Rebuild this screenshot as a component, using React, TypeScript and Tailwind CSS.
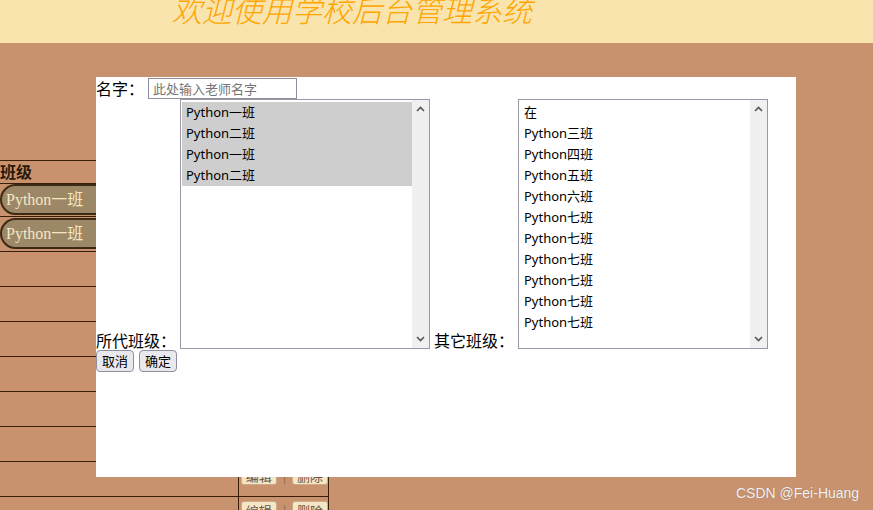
import React from 'react';

const cjk = '"Noto Sans CJK SC", sans-serif';
const uiFont = '"Noto Sans", "Noto Sans CJK SC", sans-serif';
const serif = '"Liberation Serif", "Noto Sans CJK SC", serif';

const chosen = ['Python一班', 'Python二班', 'Python一班', 'Python二班'];
const others = [
  '在',
  'Python三班',
  'Python四班',
  'Python五班',
  'Python六班',
  'Python七班',
  'Python七班',
  'Python七班',
  'Python七班',
  'Python七班',
  'Python七班',
];

function ListBox({ items, selected }: { items: string[]; selected: number }) {
  return (
    <div className="flex w-[250px] h-[250px] border border-[#9a98a6] bg-white">
      <div className="flex-1 pt-[2px] pl-[1px]" style={{ fontFamily: uiFont }}>
        {items.map((t, i) => (
          <div
            key={i}
            className={
              i < selected
                ? 'h-[21px] leading-[21px] pl-[4px] text-[13px] text-black bg-[#cecece]'
                : 'h-[21px] leading-[21px] pl-[4px] text-[13px] text-black'
            }
          >
            {t}
          </div>
        ))}
      </div>
      <div className="w-[17px] bg-[#f0f0f0] flex flex-col justify-between items-center pt-[6px] pb-[6px]">
        <svg width="9" height="6" viewBox="0 0 9 6">
          <path d="M1 5 L4.5 1.5 L8 5" fill="none" stroke="#555" strokeWidth="1.6" />
        </svg>
        <svg width="9" height="6" viewBox="0 0 9 6">
          <path d="M1 1 L4.5 4.5 L8 1" fill="none" stroke="#555" strokeWidth="1.6" />
        </svg>
      </div>
    </div>
  );
}

function ActionCell() {
  return (
    <div className="flex items-start pt-[4px] pl-[2px] gap-[6px] text-[13px]" style={{ fontFamily: cjk }}>
      <span className="h-[19px] w-[36px] leading-[17px] text-center bg-[#f5e6c8] border border-[#c9ab85] rounded-[3px] text-[#6b5440]">编辑</span>
      <span className="text-[#8a6a50] leading-[19px]">|</span>
      <span className="h-[19px] w-[36px] leading-[17px] text-center bg-[#f5e6c8] border border-[#c9ab85] rounded-[3px] text-[#6b5440]">删除</span>
    </div>
  );
}

function Pill() {
  return (
    <div
      className="w-[200px] h-[31px] bg-[#9c8866] border-2 border-[#3b2a14] rounded-l-[16px] pl-[4px] text-[16px] leading-[27px] text-[#f5e6c4]"
      style={{ fontFamily: serif }}
    >
      Python一班
    </div>
  );
}

export default function App() {
  return (
    <div className="relative w-[873px] h-[510px] overflow-hidden bg-[#c8926f]">
      <div className="h-[43px] bg-[#f8e4ac] overflow-hidden">
        <h1
          className="ml-[172px] mt-[-6px] text-[30px] leading-[30px] italic font-light text-[#ffa500]"
          style={{ fontFamily: cjk }}
        >
          欢迎使用学校后台管理系统
        </h1>
      </div>

      {/* class table behind the dialog */}
      <div className="mt-[117px] w-[329px]">
        <div className="h-[24px] border-t border-b border-[#3a1e08] text-[16px] leading-[20px] font-semibold text-[#2a1808]" style={{ fontFamily: cjk }}>
          班级
        </div>
        <div className="h-[33px] border-b border-[#3a1e08]">
          <Pill />
        </div>
        <div className="h-[35px] border-b border-[#3a1e08] pt-[1px]">
          <Pill />
        </div>
        {[0, 1, 2, 3, 4, 5, 6, 7].map((i) => (
          <div key={i} className="h-[35px] border-b border-[#3a1e08] flex">
            <div className="w-[238px]" />
            <div className="w-[91px] border-l border-r border-[#3a1e08]">
              <ActionCell />
            </div>
          </div>
        ))}
      </div>

      {/* dialog */}
      <div className="absolute left-[96px] top-[77px] w-[700px] h-[400px] bg-white text-black">
        <div className="flex items-center h-[22px]">
          <span className="text-[16px] w-[48px]" style={{ fontFamily: cjk }}>名字：</span>
          <input
            className="ml-[4px] w-[149px] h-[21px] border border-[#8f8f9d] px-[4px] text-[13px] placeholder:text-[#757575] outline-none"
            style={{ fontFamily: cjk }}
            placeholder="此处输入老师名字"
          />
        </div>
        <div className="flex items-end">
          <span className="w-[84px] text-[16px] leading-[16px] mb-[1px]" style={{ fontFamily: cjk }}>所代班级：</span>
          <ListBox items={chosen} selected={4} />
          <span className="ml-[4px] w-[84px] text-[16px] leading-[16px] mb-[1px]" style={{ fontFamily: cjk }}>其它班级：</span>
          <ListBox items={others} selected={0} />
        </div>
        <div className="flex gap-[5px] mt-[1px]">
          <button className="h-[22px] w-[38px] bg-[#e9e9ed] border border-[#8f8f9d] rounded-[4px] text-[13px] leading-[20px]" style={{ fontFamily: cjk }}>取消</button>
          <button className="h-[22px] w-[38px] bg-[#e9e9ed] border border-[#8f8f9d] rounded-[4px] text-[13px] leading-[20px]" style={{ fontFamily: cjk }}>确定</button>
        </div>
      </div>

      <div
        className="absolute left-[736px] top-[483px] text-[14px] text-[#f2f2f2]"
        style={{ fontFamily: '"Liberation Sans", sans-serif', textShadow: '0 0 1px rgba(0,0,0,0.25)' }}
      >
        CSDN @Fei-Huang
      </div>
    </div>
  );
}
